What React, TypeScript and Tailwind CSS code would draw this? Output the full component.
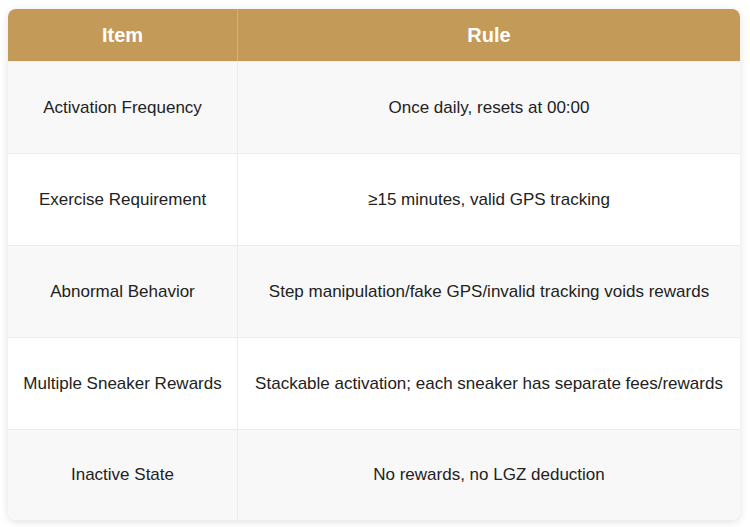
import React from "react";

const rows: [string, string][] = [
  ["Activation Frequency", "Once daily, resets at 00:00"],
  ["Exercise Requirement", "≥15 minutes, valid GPS tracking"],
  ["Abnormal Behavior", "Step manipulation/fake GPS/invalid tracking voids rewards"],
  ["Multiple Sneaker Rewards", "Stackable activation; each sneaker has separate fees/rewards"],
  ["Inactive State", "No rewards, no LGZ deduction"],
];

export default function App() {
  return (
    <div className="w-[750px] h-[527px] bg-white px-2 pt-[9px]" style={{ fontFamily: '"Liberation Sans", Arial, sans-serif' }}>
      <div className="w-[732px] rounded-lg overflow-hidden shadow-[0_2px_8px_rgba(0,0,0,0.12)] bg-white">
        <div className="grid grid-cols-[230px_1fr] h-[52px] bg-[#c49a58] text-white font-bold text-[20px]">
          <div className="flex items-center justify-center border-r border-[#d3b07c]">Item</div>
          <div className="flex items-center justify-center">Rule</div>
        </div>
        {rows.map(([a, b], i) => (
          <div
            key={a}
            className={
              "grid grid-cols-[230px_1fr] text-[17px] text-[#222] border-t border-[#ececec] " +
              (i === rows.length - 1 ? "h-[91px] " : "h-[92px] ") +
              (i % 2 === 0 ? "bg-[#f8f8f8]" : "bg-white")
            }
          >
            <div className="flex items-center justify-center text-center border-r border-[#ececec] px-3">{a}</div>
            <div className="flex items-center justify-center text-center px-3">{b}</div>
          </div>
        ))}
      </div>
    </div>
  );
}
